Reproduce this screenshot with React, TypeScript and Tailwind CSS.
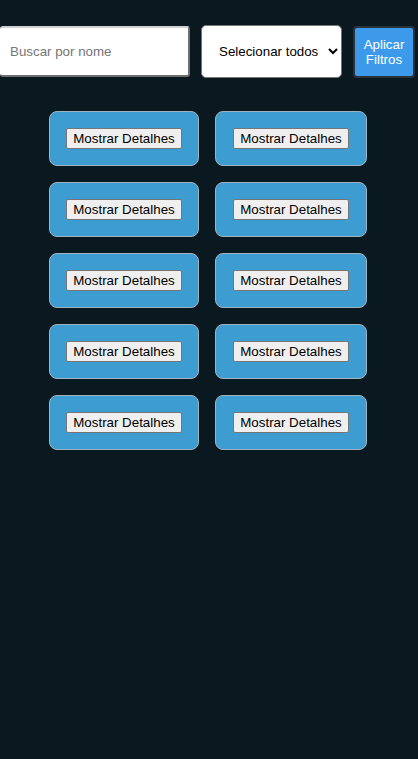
import React from "react";

export default function App() {
  const items = Array.from({ length: 10 });
  return (
    <div className="min-h-[759px] w-full bg-[#0a1920] font-['Liberation_Sans',Arial,sans-serif] text-[13.33px]">
      <div className="flex items-center pt-[25px]">
        <input
          type="text"
          placeholder="Buscar por nome"
          className="h-[51px] w-[190px] rounded-[3px] border-2 border-l-0 border-t-[#d0d0d0] border-r-[#6f6f6f] border-b-[#6f6f6f] bg-white pl-[10px] font-['Liberation_Sans',Arial,sans-serif] text-[13.33px] text-black outline-none placeholder:text-[#757575]"
        />
        <select className="ml-[11px] h-[53px] w-[141px] rounded-[5px] border border-[#767676] bg-white pl-[13px] font-['Liberation_Sans',Arial,sans-serif] text-[13.33px] text-black outline-none">
          <option>Selecionar todos</option>
        </select>
        <button className="ml-[11px] flex h-[52px] w-[62px] flex-col items-center justify-center rounded-[4px] border-2 border-[#2a3338] bg-[#3d9aea] font-['Liberation_Sans',Arial,sans-serif] text-[13.33px] leading-[15px] text-white">
          <span>Aplicar</span>
          <span>Filtros</span>
        </button>
      </div>
      <div className="mt-[33px] flex justify-center pr-[2px]">
        <div className="grid grid-cols-[150px_152px] gap-x-[16px] gap-y-[16px]">
          {items.map((_, i) => (
            <div
              key={i}
              className="flex h-[55px] items-center justify-center rounded-[8px] border border-[#9fb3c0] bg-[#3d9cd0]"
            >
              <button className="h-[21px] rounded-[2px] border border-[#767676] bg-[#efefef] px-[6px] font-['Liberation_Sans',Arial,sans-serif] text-[13.33px] leading-[15px] text-black">
                Mostrar Detalhes
              </button>
            </div>
          ))}
        </div>
      </div>
    </div>
  );
}
